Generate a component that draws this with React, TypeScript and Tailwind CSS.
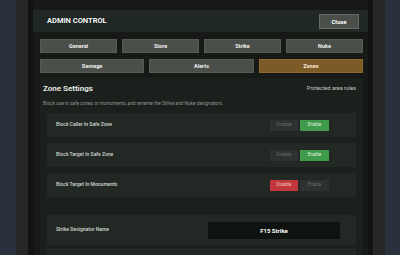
import React from 'react';

const tabsTop = ['General', 'Store', 'Strike', 'Nuke'];
const tabsBottom = ['Damage', 'Alerts', 'Zones'];

interface ToggleRowProps {
    label: string;
    enabled: boolean;
}

function ToggleRow({ label, enabled }: ToggleRowProps) {
    return (
        <div className="h-[24px] shrink-0 bg-[#222925] flex items-center justify-between pl-[9px] pr-[27px]">
            <span className="text-[5px] font-medium text-[#d3d7d3]">{label}</span>
            <div className="flex gap-[2px]">
                <div
                    className={
                        enabled
                            ? 'w-[28px] h-[11px] flex items-center justify-center text-[4.5px] bg-[#2d312f] text-[#6b6f6c]'
                            : 'w-[28px] h-[11px] flex items-center justify-center text-[4.5px] bg-[#c2373b] text-[#f3c4c4]'
                    }
                >
                    Disable
                </div>
                <div
                    className={
                        enabled
                            ? 'w-[29px] h-[11px] flex items-center justify-center text-[4.5px] bg-[#3f9a4b] text-[#dcf2dc]'
                            : 'w-[29px] h-[11px] flex items-center justify-center text-[4.5px] bg-[#2d312f] text-[#6b6f6c]'
                    }
                >
                    Enable
                </div>
            </div>
        </div>
    );
}

function NameRow({ label, value }: { label: string; value: string }) {
    return (
        <div className="h-[30px] shrink-0 bg-[#222925] flex items-center justify-between pl-[9px] pr-[16px]">
            <span className="text-[5px] font-medium text-[#d3d7d3]">{label}</span>
            <div className="w-[132px] h-[17px] bg-[#0e130f] flex items-center justify-center text-[6px] font-bold text-white">
                {value}
            </div>
        </div>
    );
}

export default function App() {
    return (
        <div
            className="w-[400px] h-[255px] overflow-hidden flex bg-[#29313c] pl-[16px] pr-[15px]"
            style={{ fontFamily: 'Roboto, "Liberation Sans", sans-serif' }}
        >
            <div className="flex-1 flex bg-[#262727] px-[12px]">
                <div className="flex-1 flex flex-col overflow-hidden bg-[#161916] border-x-[5px] border-[#121413] pt-[10px]">
                    <div className="h-[22px] shrink-0 bg-[#1f2824] flex items-center justify-between pl-[14px] pr-[9px]">
                        <span className="text-[7.5px] font-semibold text-white">ADMIN CONTROL</span>
                        <div className="w-[40px] h-[15px] bg-[#4a4f4a] border border-[#656a64] flex items-center justify-center text-[6px] font-bold text-white">
                            Close
                        </div>
                    </div>

                    <div className="shrink-0 pl-[7px] pr-[5px] pt-[7px] flex flex-col gap-[6px]">
                        <div className="grid grid-cols-4 gap-[5px]">
                            {tabsTop.map((t) => (
                                <div
                                    key={t}
                                    className="h-[14px] bg-[#4b4f4a] border border-[#575b56] flex items-center justify-center text-[5.5px] font-bold text-[#eef0ee]"
                                >
                                    {t}
                                </div>
                            ))}
                        </div>
                        <div className="grid grid-cols-3 gap-[5px]">
                            {tabsBottom.map((t) => (
                                <div
                                    key={t}
                                    className={
                                        t === 'Zones'
                                            ? 'h-[14px] bg-[#7d5b26] border border-[#8e6a30] flex items-center justify-center text-[5.5px] font-bold text-[#f6ecd8]'
                                            : 'h-[14px] bg-[#4b4f4a] border border-[#575b56] flex items-center justify-center text-[5.5px] font-bold text-[#eef0ee]'
                                    }
                                >
                                    {t}
                                </div>
                            ))}
                        </div>
                    </div>

                    <div className="shrink-0 mt-[5px] ml-[7px] mr-[5px] bg-[#1b201d] px-[3px] pt-[4px] pb-[20px] flex flex-col">
                        <div className="flex items-center justify-between pr-[4px]">
                            <span className="text-[8px] leading-[13px] font-semibold text-[#eef0ee]">Zone Settings</span>
                            <span className="text-[5.5px] text-[#c9ccc9]">Protected area rules</span>
                        </div>
                        <p className="mt-[5px] text-[4.8px] leading-[8px] text-[#8f948f]">
                            Block use in safe zones or monuments, and rename the Strike and Nuke designators.
                        </p>
                        <div className="mt-[5px] mx-[4px] flex flex-col gap-[6px]">
                            <ToggleRow label="Block Caller In Safe Zone" enabled />
                            <ToggleRow label="Block Target In Safe Zone" enabled />
                            <ToggleRow label="Block Target In Monuments" enabled={false} />
                        </div>
                        <div className="mt-[18px] mx-[4px] flex flex-col gap-[3px]">
                            <NameRow label="Strike Designator Name" value="F15 Strike" />
                            <NameRow label="Nuke Designator Name" value="F15 Nuke" />
                        </div>
                    </div>
                </div>
            </div>
        </div>
    );
}
